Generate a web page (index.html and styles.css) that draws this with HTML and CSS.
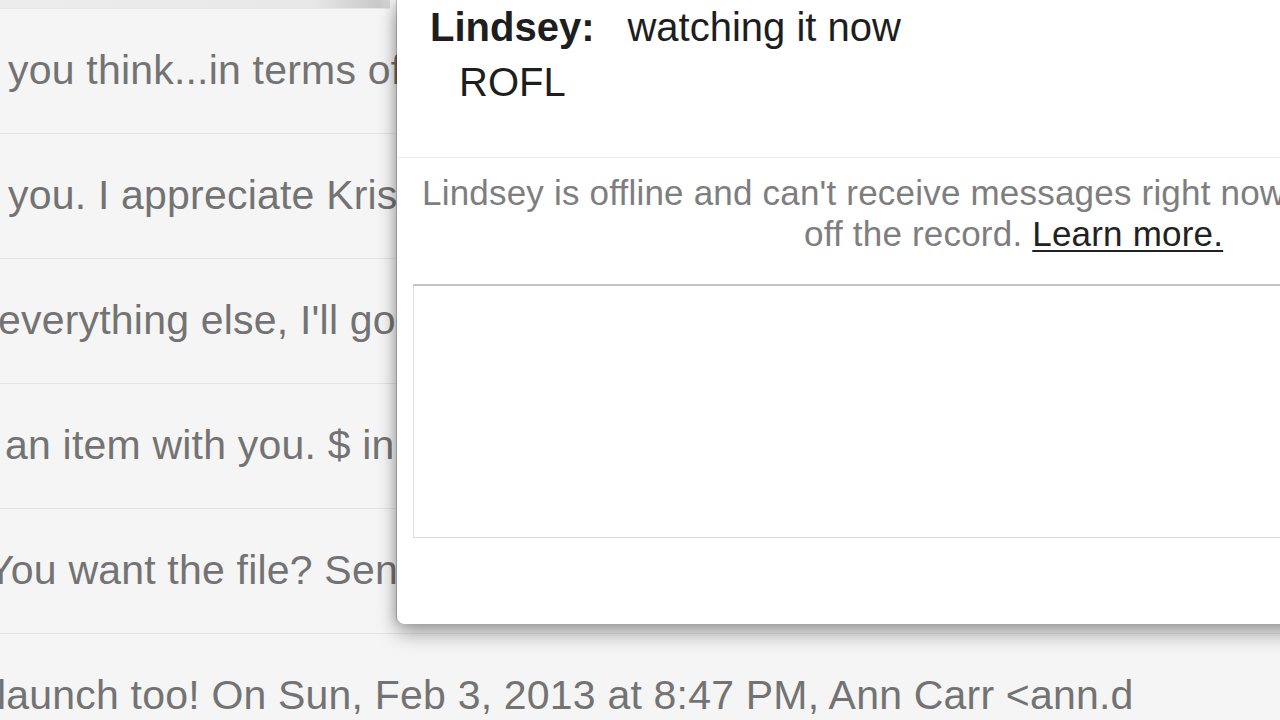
FILE: index.html
```html
<!DOCTYPE html>
<html lang="en">
<head>
<meta charset="utf-8">
<title>Chat</title>
<link rel="stylesheet" href="styles.css">
</head>
<body>
<div class="page">
  <div class="list">
    <div class="topbar"></div>
    <div class="row"><span class="snip s1">you think...in terms of ROI and Q1 goals</span></div>
    <div class="row"><span class="snip s2">you. I appreciate Kristen's help with this</span></div>
    <div class="row"><span class="snip s3">everything else, I'll go ahead and send it</span></div>
    <div class="row"><span class="snip s4">an item with you. $ in the budget for it</span></div>
    <div class="row"><span class="snip s5">You want the file? Send me a note</span></div>
    <div class="row"><span class="snip s6">launch too! On Sun, Feb 3, 2013 at 8:47 PM, Ann Carr &lt;ann.d</span></div>
  </div>

  <div class="chat">
    <div class="messages">
      <div class="msg"><span class="who">Lindsey:</span><span class="said">watching it now</span></div>
      <div class="msg cont">ROFL</div>
    </div>
    <div class="notice">
      <div class="line1">Lindsey is offline and can't receive messages right now</div>
      <div class="line2">off the record. <a class="learn" href="#">Learn more.</a></div>
    </div>
    <div class="input"></div>
  </div>
</div>
</body>
</html>
```

FILE: styles.css
```css
html, body {
  margin: 0;
  padding: 0;
  width: 1280px;
  height: 720px;
  overflow: hidden;
  background: #f5f5f5;
}

.page {
  position: relative;
  width: 1280px;
  height: 720px;
  overflow: hidden;
  font-family: "Liberation Sans", Arial, Helvetica, sans-serif;
}

.list {
  display: flex;
  flex-direction: column;
}

.topbar {
  width: 390px;
  height: 8px;
  border-bottom: 1px solid #e6e6e6;
  background: linear-gradient(to right, #ececec 0%, #e8e8e8 80%, #c9c9c9 97%, #d8d8d8 100%);
}

.row {
  height: 124px;
  border-bottom: 1px solid #e4e4e4;
  display: flex;
  align-items: center;
  white-space: nowrap;
  overflow: hidden;
  font-size: 41px;
  letter-spacing: 0.2px;
  color: #737373;
}

.snip {
  margin-top: -1px;
}

.s1 { margin-left: 8px; }
.s2 { margin-left: 8px; }
.s3 { margin-left: -2px; }
.s4 { margin-left: 5px; }
.s5 { margin-left: -13px; }
.s6 { margin-left: -3px; }

.chat {
  position: absolute;
  left: 397px;
  top: 0;
  width: 1234px;
  height: 624px;
  background: #ffffff;
  border-radius: 0 0 0 7px;
  box-shadow: 0 9px 20px rgba(0, 0, 0, 0.36), -1px 0 0 rgba(0, 0, 0, 0.18), -4px 0 8px rgba(0, 0, 0, 0.10);
  display: flex;
  flex-direction: column;
}

.messages {
  height: 158px;
  border-bottom: 1px solid #f0f0f0;
  padding-left: 33px;
  box-sizing: border-box;
  font-size: 40px;
  color: #1e1e1e;
  line-height: 55px;
}

.msg {
  white-space: nowrap;
}

.who {
  font-weight: bold;
  margin-right: 33px;
}

.cont {
  padding-left: 29px;
}

.notice {
  padding: 14px 0 0 25px;
  font-size: 35px;
  line-height: 41px;
  letter-spacing: 0.2px;
  color: #7e7e7e;
  height: 126px;
  box-sizing: border-box;
}

.line1 {
  white-space: nowrap;
}

.line2 {
  white-space: nowrap;
  padding-left: 382px;
}

.learn {
  color: #222222;
  text-decoration: underline;
  text-decoration-thickness: 2px;
  text-underline-offset: 4px;
}

.input {
  margin: 0 16px;
  height: 254px;
  box-sizing: border-box;
  border: 1px solid #dcdcdc;
  border-top: 2px solid #c4c4c4;
  background: #ffffff;
}
```
